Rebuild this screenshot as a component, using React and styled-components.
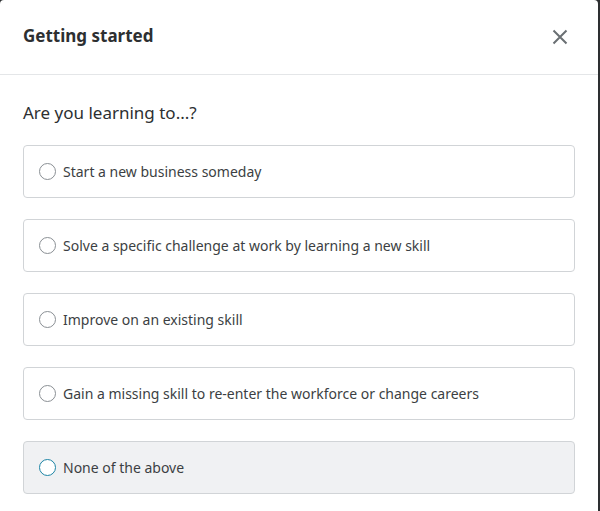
import React, { useState } from 'react';
import styled, { createGlobalStyle } from 'styled-components';

const GlobalStyle = createGlobalStyle`
  html, body {
    margin: 0;
    padding: 0;
    background: #2d2f31;
  }
  body {
    font-family: "Noto Sans", "Open Sans", sans-serif;
  }
`;

const Modal = styled.div`
  width: 598px;
  height: 511px;
  background: #fff;
  border-radius: 4px 4px 0 0;
  overflow: hidden;
  display: flex;
  flex-direction: column;
`;

const Header = styled.div`
  height: 75px;
  box-sizing: border-box;
  border-bottom: 1px solid #e4e6e8;
  display: flex;
  align-items: center;
  justify-content: space-between;
  padding: 0 23px 3px 23px;
`;

const Title = styled.h2`
  margin: 0;
  font-size: 17px;
  font-weight: 700;
  color: #2d2f31;
`;

const CloseButton = styled.button`
  background: none;
  border: none;
  padding: 0;
  width: 24px;
  height: 24px;
  display: flex;
  align-items: center;
  justify-content: center;
  margin-right: 3px;
  margin-top: 2px;
  cursor: pointer;
`;

const Body = styled.div`
  padding: 26px 23px 0 23px;
`;

const Question = styled.p`
  margin: 0 0 21px 0;
  font-size: 17px;
  color: #2d2f31;
`;

const Options = styled.div`
  display: flex;
  flex-direction: column;
  gap: 21px;
`;

const Option = styled.label`
  height: 53px;
  box-sizing: border-box;
  border: 1px solid #d1d4d7;
  border-radius: 4px;
  background: ${p => (p.$active ? '#f0f1f3' : '#fff')};
  display: flex;
  align-items: center;
  padding: 0 15px;
  gap: 7px;
  cursor: pointer;
  font-size: 14px;
  color: #3c3f43;
`;

const Radio = styled.span`
  width: 17px;
  height: 17px;
  box-sizing: border-box;
  border-radius: 50%;
  border: ${p => (p.$focus ? '1.5px solid #1c84a5' : '1px solid #8a8f94')};
  background: #fff;
  flex-shrink: 0;
`;

const choices = [
  'Start a new business someday',
  'Solve a specific challenge at work by learning a new skill',
  'Improve on an existing skill',
  'Gain a missing skill to re-enter the workforce or change careers',
  'None of the above',
];

export default function App() {
  const [hovered] = useState(4);
  return (
    <>
      <GlobalStyle />
      <Modal>
        <Header>
          <Title>Getting started</Title>
          <CloseButton aria-label="Close">
            <svg width="16" height="16" viewBox="0 0 16 16">
              <path d="M1.5 1.5 L14.5 14.5 M14.5 1.5 L1.5 14.5" stroke="#6a6f73" strokeWidth="2" />
            </svg>
          </CloseButton>
        </Header>
        <Body>
          <Question>Are you learning to...?</Question>
          <Options>
            {choices.map((c, i) => (
              <Option key={c} $active={i === hovered}>
                <Radio $focus={i === hovered} />
                {c}
              </Option>
            ))}
          </Options>
        </Body>
      </Modal>
    </>
  );
}
